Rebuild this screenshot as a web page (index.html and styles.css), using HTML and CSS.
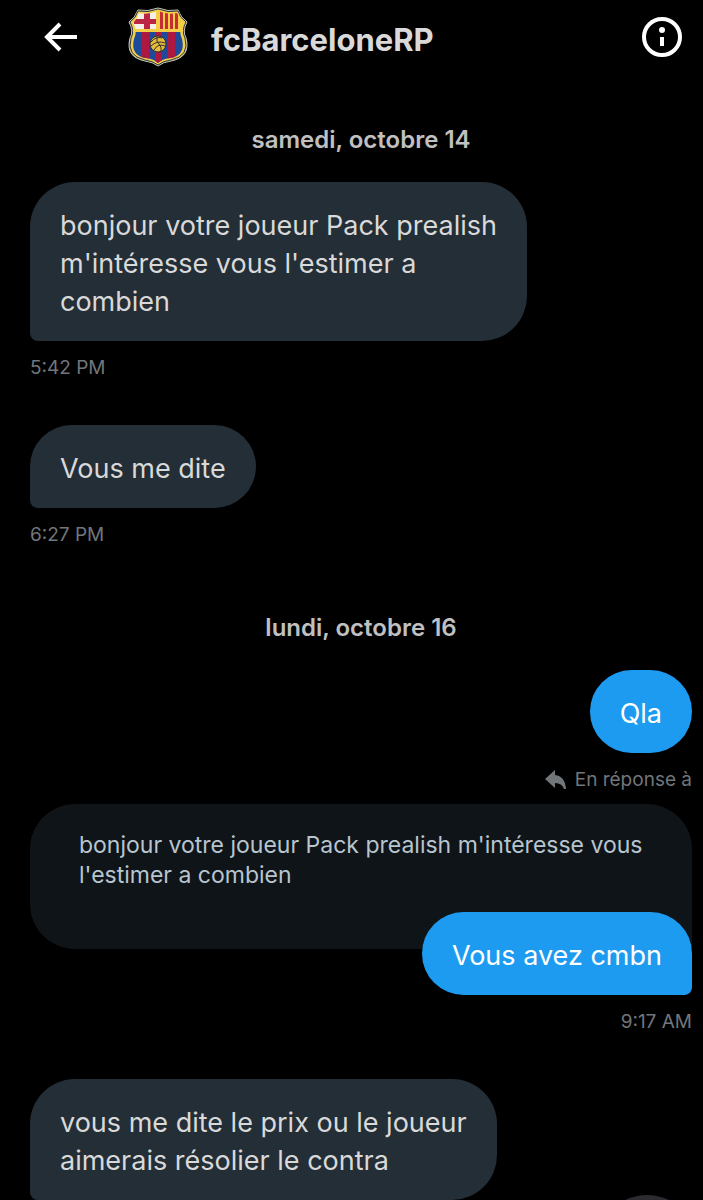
FILE: index.html
```
<!DOCTYPE html>
<html lang="fr">
    <head>
        <meta charset="utf-8">
        <meta name="viewport" content="width=device-width, initial-scale=1">
        <title>fcBarceloneRP</title>
        <link rel="stylesheet" href="styles.css">
    </head>
    <body>
        <header class="topbar">
            <button class="icon-button" type="button" aria-label="Retour">
                <svg width="34" height="30" viewBox="0 0 34 30" fill="none" stroke="#fff" stroke-width="4">
                    <path d="M33 15H4M16 2L3 15L16 28"/>
                </svg>
            </button>
            <svg class="avatar" width="60" height="60" viewBox="0 0 60 60" aria-hidden="true">
                <defs>
                    <clipPath id="shield">
                        <path d="M11 6Q20 8 30 4Q40 8 49 6Q51 12 55 16Q50 23 54 32Q58 48 42 51Q34 52 30 56Q26 52 18 51Q2 48 6 32Q10 23 5 16Q9 12 11 6Z"/>
                    </clipPath>
                </defs>
                <path d="M10 3Q20 5 30 1Q40 5 50 3Q53 11 59 15Q54 24 58 31Q63 50 43 54Q35 55 30 59Q25 55 17 54Q-3 50 2 31Q6 24 1 15Q7 11 10 3Z" fill="#f3ce46" stroke="#c9c9c6" stroke-width="1"/>
                <path d="M10 4Q20 6 30 2Q40 6 50 4Q52 11 58 15Q53 24 57 31Q62 49 43 53Q35 54 30 58Q25 54 17 53Q-2 49 3 31Q7 24 2 15Q8 11 10 4Z" fill="none" stroke="#243544" stroke-width="1"/>
                <g clip-path="url(#shield)">
                    <path fill="#f3ce46" d="M0 0h60v60H0z"/>
                    <path fill="#f4efe8" d="M0 0h28v22H0z"/>
                    <path fill="#bd2544" d="M16 0h6v22h-6zM6 12h22v5H6z"/>
                    <path fill="#c52d32" d="M32 4h3v18h-3zM37 4h3v18h-3zM42 4h3v18h-3zM47 4h3v18h-3z"/>
                    <path fill="#1d4b9c" d="M0 25h60v35H0z"/>
                    <path fill="#ad1740" d="M13 25h8v35h-8zM27 25h7v35h-7zM40 25h7v35h-7z"/>
                </g>
                <path fill="#f3ce46" d="M5 22h50v3H5zM28 5h3v18h-3z"/>
                <circle cx="30" cy="37" r="8" fill="#e8bd3a" stroke="#302c30"/>
                <path d="M23 35Q28 29 34 31M23 39Q29 33 37 36M26 43Q30 36 37 39M29 30Q28 35 31 37Q34 40 33 44" fill="none" stroke="#302c30"/>
            </svg>
            <h1 class="name">fcBarceloneRP</h1>
            <button class="icon-button info" type="button" aria-label="Informations">
                <svg width="40" height="40" viewBox="0 0 40 40">
                    <circle cx="20" cy="20" r="18" fill="none" stroke="#fff" stroke-width="4"/>
                    <circle cx="20" cy="13" r="3" fill="#fff"/>
                    <path fill="#fff" d="M18 20h4v9h-4z"/>
                </svg>
            </button>
        </header>
        <main class="chat">
            <h2 class="date">samedi, octobre 14</h2>
            <div class="message">
                <p class="bubble">bonjour votre joueur Pack prealish<br>m'intéresse vous l'estimer a<br>combien</p>
                <time class="time">5:42 PM</time>
            </div>
            <div class="message">
                <p class="bubble">Vous me dite</p>
                <time class="time">6:27 PM</time>
            </div>
            <h2 class="date">lundi, octobre 16</h2>
            <div class="message sent">
                <p class="bubble round">Qla</p>
                <div class="reply-label">
                    <svg width="22" height="20" viewBox="0 0 22 20" fill="#71767b">
                        <path d="M0 9L10 0V5Q20 6 21 19H19Q17 13 10 13V18Z"/>
                    </svg>
                    <span>En réponse à</span>
                </div>
                <blockquote class="quote">bonjour votre joueur Pack prealish m'intéresse vous l'estimer a combien</blockquote>
                <p class="bubble reply">Vous avez cmbn</p>
                <time class="time">9:17 AM</time>
            </div>
            <div class="message">
                <p class="bubble">vous me dite le prix ou le joueur<br>aimerais résolier le contra</p>
            </div>
        </main>
        <button class="scroll-down" type="button" aria-label="Descendre"></button>
    </body>
</html>
```

FILE: styles.css
```
* {
    box-sizing: border-box;
}
body {
    margin: 0;
    min-height: 100vh;
    background-color: #000;
    color: #d9d9d9;
    font-family: Inter, "Noto Sans", sans-serif;
}
h1, h2, p, blockquote {
    margin: 0;
}
button {
    border: none;
    padding: 0;
    background: none;
    cursor: pointer;
}
svg {
    display: block;
}
.topbar {
    display: flex;
    align-items: center;
    height: 76px;
    padding: 0 21px 2px 44px;
}
.avatar {
    margin-left: 50px;
}
.name {
    margin-left: 23px;
    padding-top: 6px;
    font-size: 31px;
    line-height: 40px;
}
.info {
    margin-left: auto;
}
.chat {
    padding: 28px 11px 0 30px;
}
.date {
    padding: 21px 0 27px;
    color: #c0c0c0;
    font-size: 24px;
    line-height: 30px;
    font-weight: 600;
    text-align: center;
}
.message {
    display: flex;
    flex-direction: column;
    align-items: flex-start;
    margin-bottom: 42px;
}
.message:last-child {
    margin-bottom: 0;
}
.sent {
    align-items: flex-end;
}
.bubble {
    max-width: 82%;
    padding: 25px 30px 20px;
    border-radius: 45px 45px 45px 8px;
    background-color: #242e36;
    font-size: 27px;
    line-height: 38px;
}
.sent .bubble {
    border-radius: 45px 45px 8px 45px;
    background-color: #1d9bf0;
    color: #fff;
}
.sent .round {
    border-radius: 45px;
}
.time, .reply-label {
    margin-top: 12px;
    color: #71767b;
    font-size: 19px;
    line-height: 30px;
}
.reply-label {
    display: flex;
    align-items: center;
    gap: 8px;
}
.quote {
    width: 100%;
    margin-top: 9px;
    padding: 26px 48px 59px 49px;
    border-radius: 45px 45px 0 45px;
    background-color: #0f1418;
    color: #b8c5cf;
    font-size: 23px;
    line-height: 30px;
}
.sent .reply {
    margin-top: -37px;
}
.scroll-down {
    position: fixed;
    right: 6px;
    bottom: -95px;
    width: 100px;
    height: 100px;
    border-radius: 50%;
    background-color: #2c2b30;
}
```
